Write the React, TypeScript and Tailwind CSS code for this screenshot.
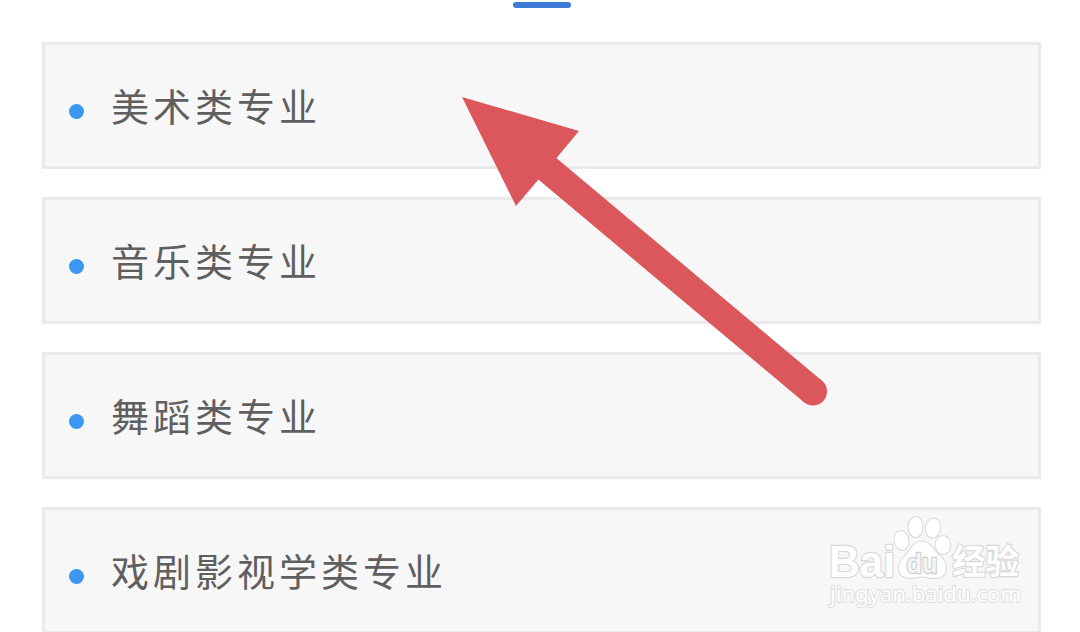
const majors = ['美术类专业', '音乐类专业', '舞蹈类专业', '戏剧影视学类专业'];

function MajorCard({ name }: { name: string }) {
  return (
    <li className="flex h-[127px] shrink-0 items-center border-3 border-[#eaeaea] bg-[#f7f7f7] pb-px pl-6">
      <span className="mt-3 size-[15px] shrink-0 rounded-full bg-[#3b97f2]" />
      <span className="ml-[27px] text-[38px] leading-none tracking-[4px] whitespace-nowrap text-[#5f5f5f]">
        {name}
      </span>
    </li>
  );
}

function Arrow() {
  return (
    <svg className="absolute top-0 left-0" width="1080" height="632" viewBox="0 0 1080 632" aria-hidden="true">
      <path d="M547 168.500L813 391.500" stroke="#db575c" strokeWidth="28" strokeLinecap="butt" />
      <circle cx="813" cy="391.500" r="14" fill="#db575c" />
      <path d="M462 97L579 131L556.500 158L538.500 179.500L516 206Z" fill="#db575c" />
    </svg>
  );
}

function Watermark() {
  return (
    <svg
      className="absolute top-[510px] left-[820px]"
      width="220"
      height="110"
      viewBox="0 0 220 110"
      fill="#fff"
      stroke="#d9d9d9"
      strokeWidth="2.4"
      strokeLinejoin="round"
      paintOrder="stroke"
    >
      <text x="9" y="66.500" fontFamily="'Liberation Sans', Arial, sans-serif" fontWeight="700" fontSize="44" textLength="66" lengthAdjust="spacingAndGlyphs">
        Bai
      </text>
      <g strokeWidth="2">
        <ellipse cx="81.500" cy="30.500" rx="7" ry="9.500" transform="rotate(-8 81.500 30.500)" />
        <ellipse cx="95.500" cy="17" rx="7" ry="10" />
        <ellipse cx="113" cy="18" rx="7.200" ry="9.500" transform="rotate(10 113 18)" />
        <ellipse cx="123" cy="35" rx="7.300" ry="9" />
        <path d="M102 31.500C108 31.500 111 36 114 40C118 45 126 49 126 58C126 65 121 68 114 68C109 68 106 66.500 102 66.500C98 66.500 95 68 90 68C83 68 79 64 79 57C79 50 86 46 90 40C93 35 96 31.500 102 31.500Z" />
      </g>
      <text x="86.500" y="62.500" fontFamily="'Liberation Sans', Arial, sans-serif" fontWeight="700" fontSize="28" textLength="31" lengthAdjust="spacingAndGlyphs" fill="#f4f4f4" stroke="#cecece" strokeWidth="2.400">
        du
      </text>
      <text x="132" y="64" fontFamily="'Noto Sans CJK SC', sans-serif" fontWeight="700" fontSize="34" textLength="67" lengthAdjust="spacingAndGlyphs">
        经验
      </text>
      <text x="10" y="92" fontFamily="'Noto Sans', sans-serif" fontSize="22" textLength="191" lengthAdjust="spacingAndGlyphs" stroke="#dedede" strokeWidth="2">
        jingyan.baidu.com
      </text>
    </svg>
  );
}

export default function App() {
  return (
    <main className="relative h-[632px] w-[1080px] overflow-hidden bg-white pt-0.5 font-['Noto_Sans_CJK_SC',sans-serif]">
      <div className="ml-[513px] h-1.5 w-[58px] rounded-full bg-[#3e7bd6]" />
      <ul className="mt-[34px] ml-[42px] flex w-[999px] flex-col gap-7">
        {majors.map((name) => (
          <MajorCard key={name} name={name} />
        ))}
      </ul>
      <Arrow />
      <Watermark />
    </main>
  );
}
